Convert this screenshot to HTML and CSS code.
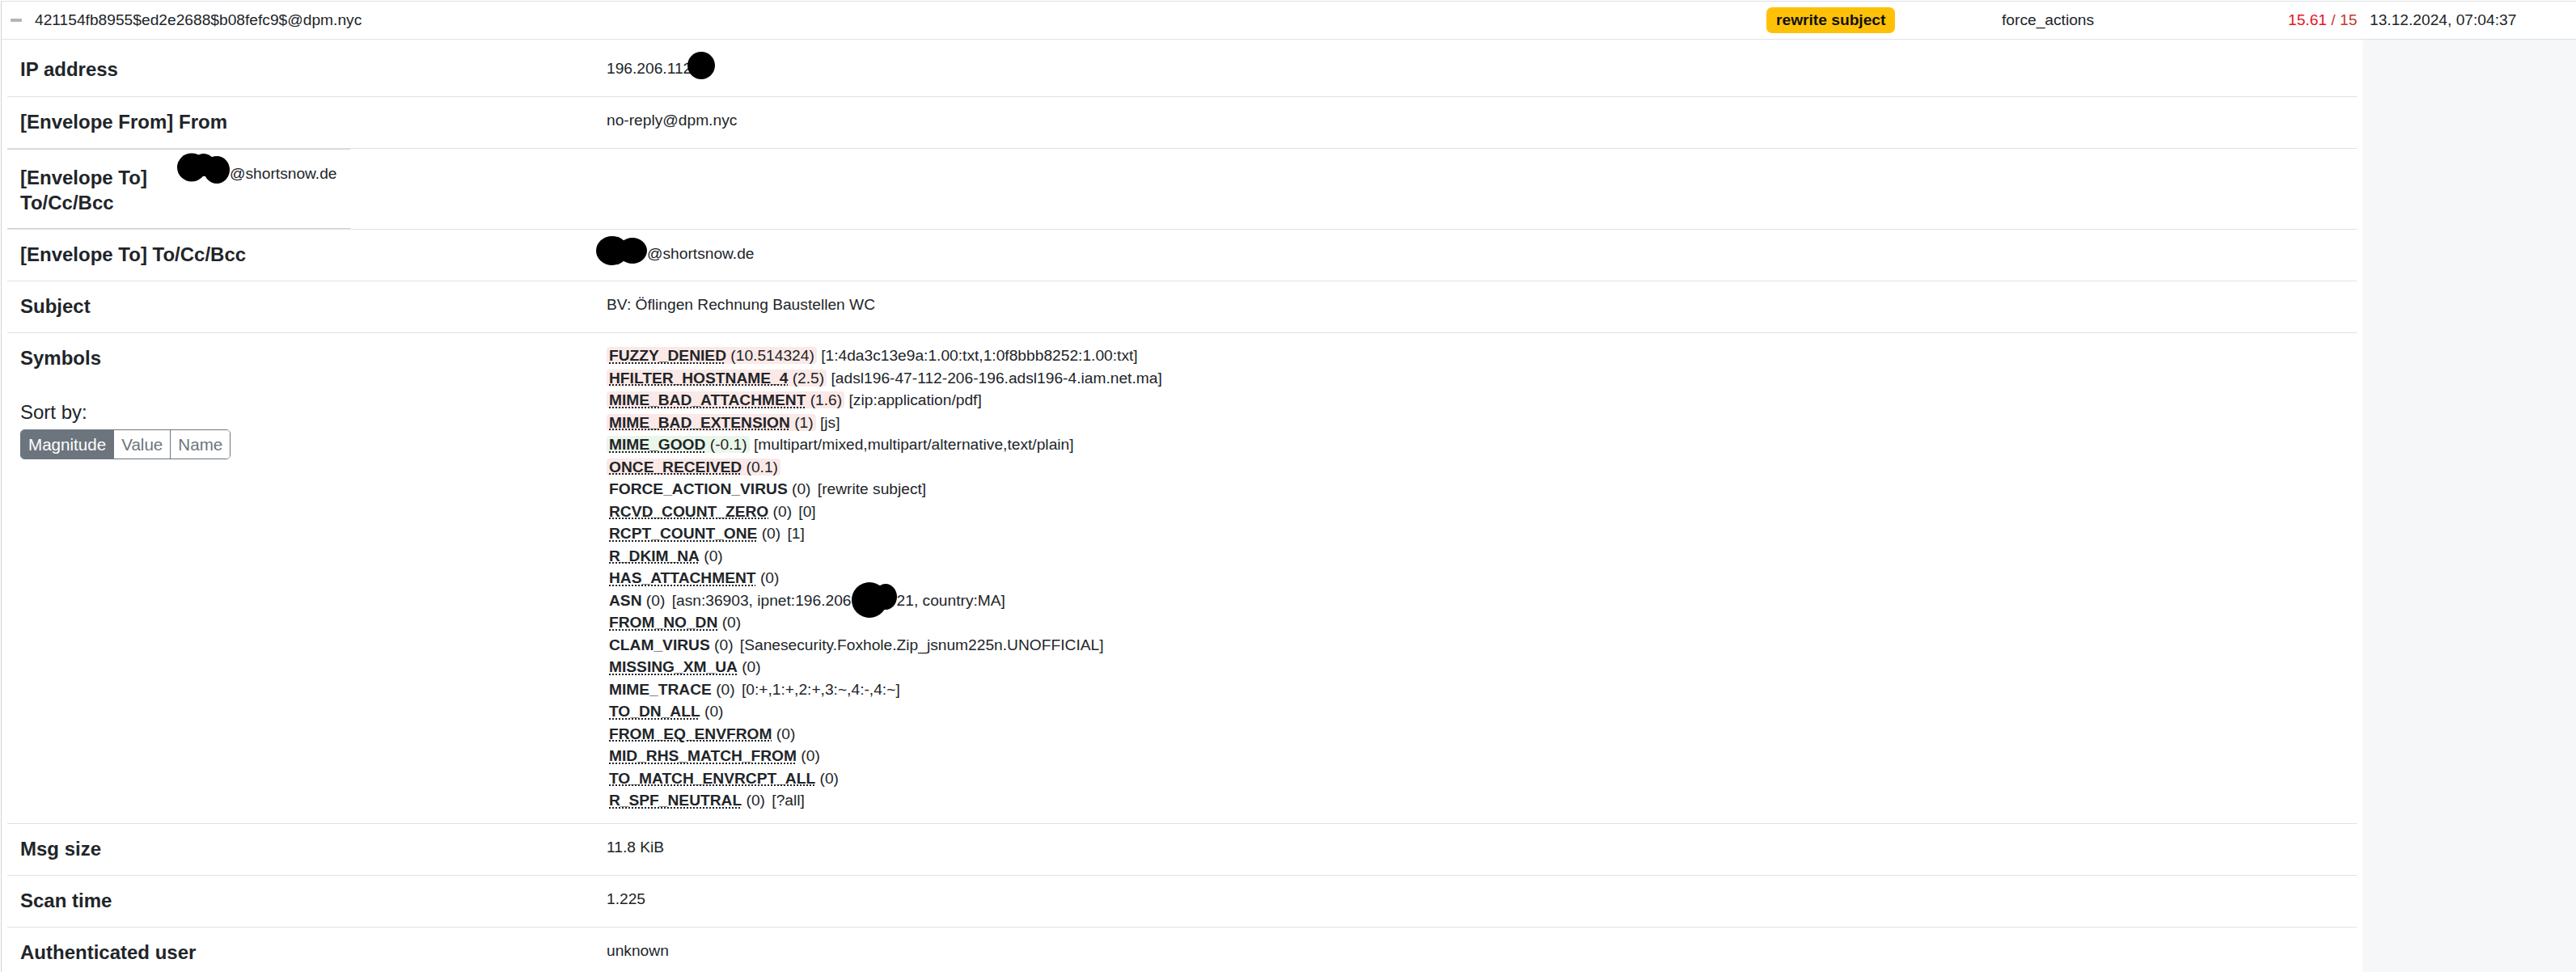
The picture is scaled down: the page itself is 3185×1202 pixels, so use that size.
FILE: index.html
```html
<!DOCTYPE html>
<html lang="en">
<head>
  <meta charset="UTF-8">
  <title>Rspamd history</title>
  <link rel="stylesheet" href="styles.css">
</head>
<body>
  <div class="history">
    <div class="msg-row">
      <div class="cell toggle"><span class="collapse-icon"></span></div>
      <div class="cell msg-id">421154fb8955$ed2e2688$b08fefc9$@dpm.nyc</div>
      <div class="cell action"><span class="badge">rewrite subject</span></div>
      <div class="cell passthrough">force_actions</div>
      <div class="cell score"><span class="score-val">15.61</span><span class="score-req"> / 15</span></div>
      <div class="cell time">13.12.2024, 07:04:37</div>
    </div>

    <div class="detail-row">
      <div class="detail-cell">
        <table class="details">
          <tr class="row-ip">
            <th>IP address</th>
            <td>196.206.112<span class="redacted red-ip"><svg width="34" height="34" viewBox="0 0 34 34"><circle cx="17" cy="17" r="17"/></svg></span></td>
          </tr>
          <tr>
            <th>[Envelope From] From</th>
            <td>no-reply@dpm.nyc</td>
          </tr>
          <tr class="row-nested">
            <td colspan="2" class="nested">
              <table class="inner">
                <tr>
                  <th>[Envelope To] To/Cc/Bcc</th>
                  <td><span class="redacted red-rcpt1"><svg width="66" height="38" viewBox="0 0 66 38"><ellipse cx="18" cy="18" rx="18" ry="17.5"/><ellipse cx="33" cy="15" rx="14" ry="14"/><ellipse cx="49" cy="21" rx="16" ry="17"/></svg></span>@shortsnow.de</td>
                </tr>
              </table>
            </td>
          </tr>
          <tr>
            <th>[Envelope To] To/Cc/Bcc</th>
            <td><span class="redacted red-rcpt2"><svg width="63" height="36" viewBox="0 0 63 36"><ellipse cx="20" cy="18" rx="20" ry="18"/><ellipse cx="45" cy="18" rx="18" ry="16"/></svg></span>@shortsnow.de</td>
          </tr>
          <tr>
            <th>Subject</th>
            <td>BV: Öflingen Rechnung Baustellen WC</td>
          </tr>
          <tr>
            <th>
              Symbols
              <div class="sort">
                <div class="sort-label">Sort by:</div>
                <div class="btn-group">
                  <button class="btn active">Magnitude</button>
                  <button class="btn">Value</button>
                  <button class="btn">Name</button>
                </div>
              </div>
            </th>
            <td>
              <div class="symbols">
                <div class="sym"><span class="sym-score pos"><b class="desc">FUZZY_DENIED</b> (10.514324)</span> [1:4da3c13e9a:1.00:txt,1:0f8bbb8252:1.00:txt]</div>
                <div class="sym"><span class="sym-score pos"><b class="desc">HFILTER_HOSTNAME_4</b> (2.5)</span> [adsl196-47-112-206-196.adsl196-4.iam.net.ma]</div>
                <div class="sym"><span class="sym-score pos"><b class="desc">MIME_BAD_ATTACHMENT</b> (1.6)</span> [zip:application/pdf]</div>
                <div class="sym"><span class="sym-score pos"><b class="desc">MIME_BAD_EXTENSION</b> (1)</span> [js]</div>
                <div class="sym"><span class="sym-score neg"><b class="desc">MIME_GOOD</b> (-0.1)</span> [multipart/mixed,multipart/alternative,text/plain]</div>
                <div class="sym"><span class="sym-score pos"><b class="desc">ONCE_RECEIVED</b> (0.1)</span></div>
                <div class="sym"><span class="sym-score"><b>FORCE_ACTION_VIRUS</b> (0)</span> [rewrite subject]</div>
                <div class="sym"><span class="sym-score"><b class="desc">RCVD_COUNT_ZERO</b> (0)</span> [0]</div>
                <div class="sym"><span class="sym-score"><b class="desc">RCPT_COUNT_ONE</b> (0)</span> [1]</div>
                <div class="sym"><span class="sym-score"><b class="desc">R_DKIM_NA</b> (0)</span></div>
                <div class="sym"><span class="sym-score"><b class="desc">HAS_ATTACHMENT</b> (0)</span></div>
                <div class="sym"><span class="sym-score"><b>ASN</b> (0)</span> [asn:36903, ipnet:196.206<span class="redacted red-asn"><svg width="56" height="45" viewBox="0 0 56 45"><ellipse cx="22" cy="23" rx="22" ry="22"/><ellipse cx="42" cy="19" rx="14" ry="16"/></svg></span>21, country:MA]</div>
                <div class="sym"><span class="sym-score"><b class="desc">FROM_NO_DN</b> (0)</span></div>
                <div class="sym"><span class="sym-score"><b>CLAM_VIRUS</b> (0)</span> [Sanesecurity.Foxhole.Zip_jsnum225n.UNOFFICIAL]</div>
                <div class="sym"><span class="sym-score"><b class="desc">MISSING_XM_UA</b> (0)</span></div>
                <div class="sym"><span class="sym-score"><b>MIME_TRACE</b> (0)</span> [0:+,1:+,2:+,3:~,4:-,4:~]</div>
                <div class="sym"><span class="sym-score"><b class="desc">TO_DN_ALL</b> (0)</span></div>
                <div class="sym"><span class="sym-score"><b class="desc">FROM_EQ_ENVFROM</b> (0)</span></div>
                <div class="sym"><span class="sym-score"><b class="desc">MID_RHS_MATCH_FROM</b> (0)</span></div>
                <div class="sym"><span class="sym-score"><b class="desc">TO_MATCH_ENVRCPT_ALL</b> (0)</span></div>
                <div class="sym"><span class="sym-score"><b class="desc">R_SPF_NEUTRAL</b> (0)</span> [?all]</div>
              </div>
            </td>
          </tr>
          <tr>
            <th>Msg size</th>
            <td>11.8 KiB</td>
          </tr>
          <tr>
            <th>Scan time</th>
            <td>1.225</td>
          </tr>
          <tr>
            <th>Authenticated user</th>
            <td>unknown</td>
          </tr>
        </table>
      </div>
      <div class="detail-aside"></div>
    </div>
  </div>
</body>
</html>
```

FILE: styles.css
```css
* {
  box-sizing: border-box;
}
body {
  margin: 0;
  background: #fff;
  color: #212529;
  font-family: "Liberation Sans", Arial, sans-serif;
  font-size: 19.2px;
  overflow: hidden;
}
.history {
  margin: 1px 0 0 1px;
  border-left: 1px solid #d4d4d4;
  border-top: 1px solid #dee2e6;
}

/* collapsed message line */
.msg-row {
  display: grid;
  grid-template-columns: 41px 2141px 291px 354px 101px 1fr;
  align-items: center;
  height: 47px;
  line-height: 1.2;
  border-bottom: 1px solid #dee2e6;
}
.cell {
  white-space: nowrap;
}
.collapse-icon {
  display: block;
  width: 14px;
  height: 4px;
  margin-left: 11px;
  border-radius: 1px;
  background: #b5b5b5;
}
.badge {
  display: inline-block;
  padding: 4.5px 12px;
  border-radius: 7px;
  background: #ffc107;
  color: #111;
  font-weight: bold;
}
.score-val {
  color: #e8151f;
}
.score-req {
  color: #c0392b;
}

/* expanded details */
.detail-row {
  display: flex;
  align-items: stretch;
}
.detail-cell {
  width: 2919px;
  padding: 0 7px;
  background: #fff;
}
.detail-aside {
  flex: 1;
  background: #f6f7f9;
}
.details {
  width: 100%;
  border-collapse: collapse;
}
.details tr {
  border-bottom: 1px solid #dee2e6;
}
.details th {
  width: 725px;
  padding: 17px 16px;
  font-size: 24px;
  line-height: 28.8px;
  text-align: left;
  vertical-align: top;
}
.details td {
  padding: 17px 16px;
  line-height: 23px;
  vertical-align: top;
}
.details .row-ip th,
.details .row-ip td {
  padding: 23px 16px 18px;
}
.details td.nested {
  padding: 0;
}
.inner {
  border-collapse: separate;
  border-spacing: 0;
  border-top: 1px solid #d2d2d2;
  border-bottom: 1px solid #d2d2d2;
}
.inner tr {
  border: none;
}
.details .inner th {
  width: 196px;
  padding: 19px 16px 15px;
  line-height: 31.7px;
}
.details .inner td {
  white-space: nowrap;
}

/* redaction marks */
.redacted {
  position: relative;
  display: inline-block;
  height: 1em;
}
.redacted svg {
  position: absolute;
  fill: #000;
}
.red-ip {
  width: 30px;
}
.red-ip svg {
  left: -5px;
  top: -8px;
}
.red-rcpt1 {
  width: 63px;
}
.red-rcpt1 svg {
  left: -2px;
  top: -13px;
}
.red-rcpt2 {
  width: 50px;
}
.red-rcpt2 svg {
  left: -13px;
  top: -9px;
}
.red-asn {
  width: 56px;
}
.red-asn svg {
  left: 0;
  top: -10px;
}

/* symbols */
.sort {
  margin-top: 39px;
  font-weight: normal;
}
.sort-label {
  font-size: 24px;
  line-height: 28.8px;
}
.btn-group {
  display: inline-flex;
  margin-top: 6px;
  border: 1px solid #6c757d;
  border-radius: 5px;
  overflow: hidden;
}
.btn {
  padding: 0 9px;
  height: 35px;
  border: none;
  border-left: 1px solid #6c757d;
  background: #fff;
  color: #6c757d;
  font-family: inherit;
  font-size: 20.6px;
}
.btn:first-child {
  border-left: none;
}
.btn.active {
  background: #6c757d;
  color: #fff;
}
.symbols {
  margin: -2.5px 0;
}
.sym {
  line-height: 27.5px;
  white-space: nowrap;
}
.sym-score {
  padding: 0 3px;
  border-radius: 4px;
}
.sym-score.pos {
  background: #fbe9e7;
}
.sym-score.neg {
  background: #eaf6e9;
}
.desc {
  text-decoration: underline dotted;
  text-decoration-thickness: 2px;
  text-underline-offset: 2px;
}
```
